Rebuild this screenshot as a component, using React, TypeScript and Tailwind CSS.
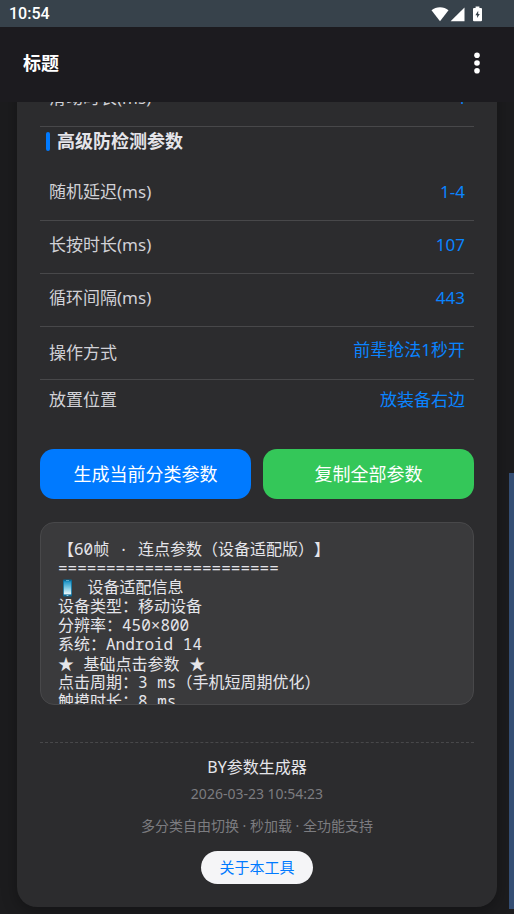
import React from "react";

type Param = {
  label: string;
  value: string;
};

const timingParams: Param[] = [
  { label: "随机延迟(ms)", value: "1-4" },
  { label: "长按时长(ms)", value: "107" },
  { label: "循环间隔(ms)", value: "443" },
];

const deviceLines = ["设备类型：移动设备", "分辨率：450×800", "系统：Android 14"];
const clickLines = ["点击周期：3 ms（手机短周期优化）", "触摸时长：8 ms"];

const StatusBar: React.FC = () => (
  <div className="flex h-[27px] shrink-0 items-center justify-between bg-[#37424b] pt-px pr-8 pl-[9px]">
    <span className="font-['Roboto',sans-serif] text-base leading-6 font-medium">10:54</span>
    <div className="flex items-center pb-px">
      <svg width="18" height="16" viewBox="0 0 18 16" fill="#fff" className="mr-px">
        <path d="M0.5 4.2C2.8 2.2 5.8 1.2 9 1.2s6.2 1 8.5 3L9 15.2z" />
      </svg>
      <svg width="15" height="16" viewBox="0 0 15 16" fill="#fff" className="mr-2">
        <path d="M14.5 1.5V15.2H0.6z" />
      </svg>
      <svg width="9" height="16" viewBox="0 0 9 16">
        <path
          d="M2.6 0.6h3.8v1.3h1.6q1 0 1 1v11.3q0 1-1 1H1q-1 0-1-1V2.9q0-1 1-1h1.6z"
          fill="#fff"
        />
        <path d="M5.2 4.8 2.4 9.2h1.7v2.9L6.8 7.9H5.2z" fill="#37424b" />
      </svg>
    </div>
  </div>
);

const ParamRow: React.FC<Param> = ({ label, value }) => (
  <div className="flex items-center justify-between border-b border-[#48484a] px-[9px] pt-3 pb-4">
    <span className="text-[#d1d1d6]">{label}</span>
    <span className="text-[#0a84ff]">{value}</span>
  </div>
);

// small phone pictogram used inside the result text
const PhoneIcon: React.FC = () => (
  <svg width="20" height="18" viewBox="0 0 20 18" className="inline-block align-middle">
    <defs>
      <linearGradient id="screen" x1="0" y1="0" x2="0" y2="1">
        <stop offset="0" stopColor="#1b93c6" />
        <stop offset="0.5" stopColor="#7cc9e4" />
        <stop offset="1" stopColor="#f0fafc" />
      </linearGradient>
    </defs>
    <rect x="5" y="0.5" width="9" height="17" rx="1" fill="#0b6a96" />
    <rect x="5.8" y="2.2" width="7.4" height="13.2" fill="url(#screen)" />
    <rect x="8" y="1" width="3" height="0.7" fill="#7fc4e0" />
    <rect x="8.6" y="16" width="1.8" height="0.8" fill="#b8e2f0" />
  </svg>
);

const Star: React.FC = () => (
  <span className="font-['Noto_Sans_CJK_SC',sans-serif]">★</span>
);

const App: React.FC = () => {
  return (
    <div className="relative flex h-screen flex-col overflow-hidden bg-[#1c1c1e] font-['Noto_Sans','Noto_Sans_CJK_SC',sans-serif] text-white">
      <StatusBar />

      <header className="flex h-[75px] shrink-0 items-center justify-between bg-[#1c1b1f] pr-7 pb-1 pl-[23px]">
        <h1 className="text-lg font-bold">标题</h1>
        <button type="button" aria-label="更多" className="flex h-10 w-[18px] items-center justify-center">
          <svg width="6" height="22" viewBox="0 0 6 22" fill="#fff">
            <circle cx="3" cy="3.2" r="2.8" />
            <circle cx="3" cy="11" r="2.8" />
            <circle cx="3" cy="18.8" r="2.8" />
          </svg>
        </button>
      </header>

      {/* reversed column keeps the list scrolled to its end */}
      <main className="flex min-h-0 flex-1 flex-col-reverse overflow-y-auto px-[17px] pb-[7px] [scrollbar-width:none]">
        <section className="rounded-[20px] bg-[#2c2c2e] px-[23px] pb-[23px] text-[17px] leading-6 shadow-[0_4px_16px_rgba(0,0,0,0.3)]">
          <ParamRow label="滑动时长(ms)" value="4" />

          <h2 className="mb-[13px] flex items-center gap-[7px] pl-1.5 text-lg leading-7 font-bold text-[#e5e5ea]">
            <span className="h-[19px] w-1 rounded-sm bg-[#007aff]" />
            高级防检测参数
          </h2>

          {timingParams.map((p) => (
            <ParamRow key={p.label} label={p.label} value={p.value} />
          ))}

          <div className="flex h-[53px] items-center justify-between border-b border-[#48484a] px-[9px]">
            <span className="text-[#d1d1d6]">操作方式</span>
            <span className="pb-1.5 text-[#0a84ff]">前辈抢法1秒开</span>
          </div>
          <div className="flex items-center justify-between px-[9px] pt-2">
            <span className="text-[#d1d1d6]">放置位置</span>
            <span className="text-[#0a84ff]">放装备右边</span>
          </div>

          <div className="mt-[37px] grid grid-cols-2 gap-3 text-lg">
            <button type="button" className="h-[50px] rounded-[14px] bg-[#007aff]">
              生成当前分类参数
            </button>
            <button type="button" className="h-[50px] rounded-[14px] bg-[#34c759]">
              复制全部参数
            </button>
          </div>

          <div className="mt-[23px] h-[183px] overflow-hidden rounded-[14px] border border-[#48484a] bg-[#3a3a3c] px-[17px] pt-[17px]">
            <pre className="font-['Noto_Sans_Mono','DejaVu_Sans_Mono','Noto_Sans_CJK_SC',monospace] text-base leading-[19px] text-[#e5e5ea] [text-spacing-trim:space-all]">
              <div>【60帧 · 连点参数（设备适配版）】</div>
              <div>=======================</div>
              <div className="flex h-[19px] items-center">
                <PhoneIcon />
                <span> 设备适配信息</span>
              </div>
              {deviceLines.map((line) => (
                <div key={line} className="h-[19px]">{line}</div>
              ))}
              <div className="h-[19px]">
                <Star /> 基础点击参数 <Star />
              </div>
              {clickLines.map((line) => (
                <div key={line} className="h-[19px]">{line}</div>
              ))}
            </pre>
          </div>

          <footer className="mt-[37px] flex flex-col items-center border-t border-dashed border-[#48484a] pt-3 text-sm leading-5 text-[#7c7c80]">
            <p className="text-base text-[#e5e5ea]">BY参数生成器</p>
            <p className="mt-[5px]">2026-03-23 10:54:23</p>
            <p className="mt-3">多分类自由切换 · 秒加载 · 全功能支持</p>
            <button
              type="button"
              className="mt-[15px] h-[33px] rounded-full bg-[#f5f5f7] px-[18px] pb-0.5 text-[15px] text-[#007aff]"
            >
              关于本工具
            </button>
          </footer>
        </section>
      </main>

      {/* scroll thumb */}
      <div className="absolute right-0 bottom-[5px] h-[436px] w-[5px] bg-[#344e74]" />
    </div>
  );
};

export default App;
